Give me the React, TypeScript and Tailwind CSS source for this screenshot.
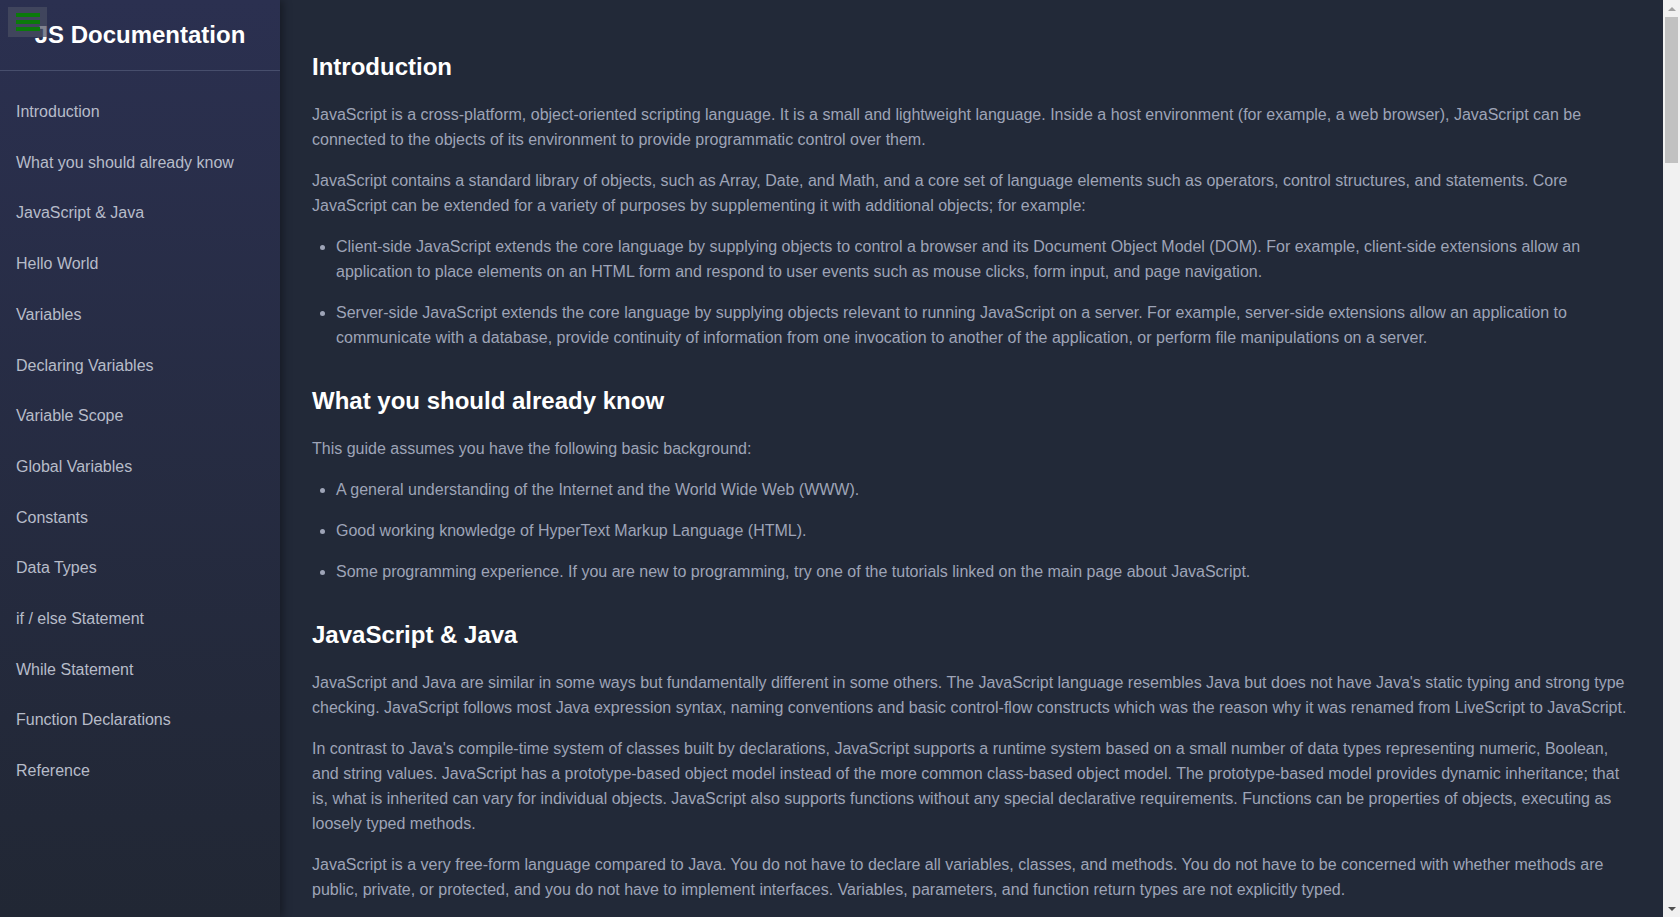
import React from "react";

type Block =
    | { kind: "p"; text: string }
    | { kind: "ul"; items: string[] }
    | { kind: "code"; text: string };

interface Section {
    title: string;
    blocks: Block[];
}

const sections: Section[] = [
    {
        title: "Introduction",
        blocks: [
            {
                kind: "p",
                text: "JavaScript is a cross-platform, object-oriented scripting language. It is a small and lightweight language. Inside a host environment (for example, a web browser), JavaScript can be connected to the objects of its environment to provide programmatic control over them.",
            },
            {
                kind: "p",
                text: "JavaScript contains a standard library of objects, such as Array, Date, and Math, and a core set of language elements such as operators, control structures, and statements. Core JavaScript can be extended for a variety of purposes by supplementing it with additional objects; for example:",
            },
            {
                kind: "ul",
                items: [
                    "Client-side JavaScript extends the core language by supplying objects to control a browser and its Document Object Model (DOM). For example, client-side extensions allow an application to place elements on an HTML form and respond to user events such as mouse clicks, form input, and page navigation.",
                    "Server-side JavaScript extends the core language by supplying objects relevant to running JavaScript on a server. For example, server-side extensions allow an application to communicate with a database, provide continuity of information from one invocation to another of the application, or perform file manipulations on a server.",
                ],
            },
        ],
    },
    {
        title: "What you should already know",
        blocks: [
            { kind: "p", text: "This guide assumes you have the following basic background:" },
            {
                kind: "ul",
                items: [
                    "A general understanding of the Internet and the World Wide Web (WWW).",
                    "Good working knowledge of HyperText Markup Language (HTML).",
                    "Some programming experience. If you are new to programming, try one of the tutorials linked on the main page about JavaScript.",
                ],
            },
        ],
    },
    {
        title: "JavaScript & Java",
        blocks: [
            {
                kind: "p",
                text: "JavaScript and Java are similar in some ways but fundamentally different in some others. The JavaScript language resembles Java but does not have Java's static typing and strong type checking. JavaScript follows most Java expression syntax, naming conventions and basic control-flow constructs which was the reason why it was renamed from LiveScript to JavaScript.",
            },
            {
                kind: "p",
                text: "In contrast to Java's compile-time system of classes built by declarations, JavaScript supports a runtime system based on a small number of data types representing numeric, Boolean, and string values. JavaScript has a prototype-based object model instead of the more common class-based object model. The prototype-based model provides dynamic inheritance; that is, what is inherited can vary for individual objects. JavaScript also supports functions without any special declarative requirements. Functions can be properties of objects, executing as loosely typed methods.",
            },
            {
                kind: "p",
                text: "JavaScript is a very free-form language compared to Java. You do not have to declare all variables, classes, and methods. You do not have to be concerned with whether methods are public, private, or protected, and you do not have to implement interfaces. Variables, parameters, and function return types are not explicitly typed.",
            },
        ],
    },
    {
        title: "Hello World",
        blocks: [
            {
                kind: "p",
                text: 'To get started with writing JavaScript, open the Scratchpad and write your first "Hello world" JavaScript code:',
            },
            {
                kind: "code",
                text: 'function greetMe(yourName) { alert("Hello " + yourName); }\ngreetMe("World");',
            },
            {
                kind: "p",
                text: "Select the code in the pad and hit Ctrl+R to watch it unfold in your browser!",
            },
        ],
    },
    {
        title: "Variables",
        blocks: [
            {
                kind: "p",
                text: "You use variables as symbolic names for values in your application. The names of variables, called identifiers, conform to certain rules.",
            },
            {
                kind: "p",
                text: 'A JavaScript identifier must start with a letter, underscore (_), or dollar sign ($); subsequent characters can also be digits (0-9). Because JavaScript is case sensitive, letters include the characters "A" through "Z" (uppercase) and the characters "a" through "z" (lowercase).',
            },
            {
                kind: "p",
                text: "You can use ISO 8859-1 or Unicode letters such as å and ü in identifiers. You can also use the Unicode escape sequences as characters in identifiers. Some examples of legal names are Number_hits, temp99, and _name.",
            },
        ],
    },
    {
        title: "Declaring Variables",
        blocks: [
            { kind: "p", text: "You can declare a variable in three ways:" },
            {
                kind: "ul",
                items: [
                    "With the keyword var. For example, var x = 42. This syntax can be used to declare both local and global variables.",
                    "By simply assigning it a value. For example, x = 42. This always declares a global variable. It generates a strict JavaScript warning. You shouldn't use this variant.",
                    "With the keyword let. For example, let y = 13. This syntax can be used to declare a block scope local variable. See Variable scope below.",
                ],
            },
        ],
    },
    {
        title: "Variable Scope",
        blocks: [
            {
                kind: "p",
                text: "When you declare a variable outside of any function, it is called a global variable, because it is available to any other code in the current document. When you declare a variable within a function, it is called a local variable, because it is available only within that function.",
            },
            {
                kind: "p",
                text: "JavaScript before ECMAScript 2015 does not have block statement scope; rather, a variable declared within a block is local to the function (or global scope) that the block resides within. For example the following code will log 5, because the scope of x is the function (or global context) within which x is declared, not the block, which in this case is an if statement.",
            },
            { kind: "code", text: "if (true) {\n  var x = 5;\n}\nconsole.log(x); // 5" },
            {
                kind: "p",
                text: "This behavior changes, when using the let declaration introduced in ECMAScript 2015.",
            },
            {
                kind: "code",
                text: "if (true) {\n  let y = 5;\n}\nconsole.log(y); // ReferenceError: y is not defined",
            },
        ],
    },
    {
        title: "Global Variables",
        blocks: [
            {
                kind: "p",
                text: "Global variables are in fact properties of the global object. In web pages the global object is window, so you can set and access global variables using the window.variable syntax.",
            },
            {
                kind: "p",
                text: "Consequently, you can access global variables declared in one window or frame from another window or frame by specifying the window or frame name. For example, if a variable called phoneNumber is declared in a document, you can refer to this variable from an iframe as parent.phoneNumber.",
            },
        ],
    },
    {
        title: "Constants",
        blocks: [
            {
                kind: "p",
                text: "You can create a read-only, named constant with the const keyword. The syntax of a constant identifier is the same as for a variable identifier: it must start with a letter, underscore or dollar sign and can contain alphabetic, numeric, or underscore characters.",
            },
            { kind: "code", text: "const PI = 3.14;" },
            {
                kind: "p",
                text: "A constant cannot change value through assignment or be re-declared while the script is running. It has to be initialized to a value.",
            },
            {
                kind: "p",
                text: "The scope rules for constants are the same as those for let block scope variables. If the const keyword is omitted, the identifier is assumed to represent a variable.",
            },
            {
                kind: "p",
                text: "You cannot declare a constant with the same name as a function or variable in the same scope. For example:",
            },
            {
                kind: "code",
                text: "// THIS WILL CAUSE AN ERROR\nfunction f() {};\nconst f = 5;\n\n// THIS WILL CAUSE AN ERROR ALSO\nfunction f() {\n  const g = 5;\n  var g;\n}",
            },
        ],
    },
    {
        title: "Data Types",
        blocks: [
            { kind: "p", text: "The latest ECMAScript standard defines seven data types:" },
            {
                kind: "ul",
                items: [
                    "Six data types that are primitives: Boolean, null, undefined, Number, String and Symbol.",
                    "and Object.",
                ],
            },
            {
                kind: "p",
                text: "Although these data types are a relatively small amount, they enable you to perform useful functions with your applications. Objects and functions are the other fundamental elements in the language. You can think of objects as named containers for values, and functions as procedures that your application can perform.",
            },
        ],
    },
    {
        title: "if / else Statement",
        blocks: [
            {
                kind: "p",
                text: "Use the if statement to execute a statement if a logical condition is true. Use the optional else clause to execute a statement if the condition is false. An if statement looks as follows:",
            },
            { kind: "code", text: "if (condition) {\n  statement_1;\n} else {\n  statement_2;\n}" },
            {
                kind: "p",
                text: "condition can be any expression that evaluates to true or false. See Boolean for an explanation of what evaluates to true and false. If condition evaluates to true, statement_1 is executed; otherwise, statement_2 is executed. statement_1 and statement_2 can be any statement, including further nested if statements.",
            },
        ],
    },
    {
        title: "While Statement",
        blocks: [
            {
                kind: "p",
                text: "A while statement executes its statements as long as a specified condition evaluates to true. A while statement looks as follows:",
            },
            { kind: "code", text: "while (condition)\n  statement" },
            {
                kind: "p",
                text: "If the condition becomes false, statement within the loop stops executing and control passes to the statement following the loop.",
            },
            {
                kind: "p",
                text: "The following while loop iterates as long as n is less than three:",
            },
            { kind: "code", text: "var n = 0;\nvar x = 0;\nwhile (n < 3) {\n  n++;\n  x += n;\n}" },
        ],
    },
    {
        title: "Function Declarations",
        blocks: [
            {
                kind: "p",
                text: "A function definition (also called a function declaration, or function statement) consists of the function keyword, followed by:",
            },
            {
                kind: "ul",
                items: [
                    "The name of the function.",
                    "A list of arguments to the function, enclosed in parentheses and separated by commas.",
                    "The JavaScript statements that define the function, enclosed in curly brackets, { }.",
                ],
            },
            {
                kind: "p",
                text: "For example, the following code defines a simple function named square:",
            },
            { kind: "code", text: "function square(number) {\n  return number * number;\n}" },
            {
                kind: "p",
                text: "The function square takes one argument, called number. The function consists of one statement that says to return the argument of the function (that is, number) multiplied by itself.",
            },
        ],
    },
    {
        title: "Reference",
        blocks: [
            {
                kind: "ul",
                items: ["All the documentation in this page is taken from MDN"],
            },
        ],
    },
];

const SectionBlock = ({ section }: { section: Section }) => (
    <section>
        <h2 className="mb-[21px] text-2xl font-bold leading-7 text-white">
            {section.title}
        </h2>
        {section.blocks.map((b, i) => {
            if (b.kind === "p") {
                return (
                    <p key={i} className="mb-4">
                        {b.text}
                    </p>
                );
            }
            if (b.kind === "ul") {
                return (
                    <ul key={i} className="list-disc pl-6">
                        {b.items.map((it, j) => (
                            <li key={j} className="mb-4">
                                {it}
                            </li>
                        ))}
                    </ul>
                );
            }
            return (
                <pre
                    key={i}
                    className="mb-4 whitespace-pre-wrap rounded bg-[#2c3347] px-4 py-3 font-['Liberation_Mono',monospace] text-sm text-[#c6cbd8]"
                >
                    {b.text}
                </pre>
            );
        })}
    </section>
);

// window scrollbar as it shows in the screenshot
const ScrollTrack = () => (
    <div className="sticky top-0 flex h-screen w-[17px] shrink-0 flex-col bg-[#f1f1f1]">
        <div className="flex h-[17px] items-center justify-center">
            <div className="h-0 w-0 border-x-[4px] border-b-[4px] border-x-transparent border-b-[#a3a3a3]" />
        </div>
        <div className="mx-[2px] h-[146px] bg-[#c1c1c1]" />
        <div className="flex-1" />
        <div className="flex h-[17px] items-center justify-center">
            <div className="h-0 w-0 border-x-[4px] border-t-[4px] border-x-transparent border-t-[#505050]" />
        </div>
    </div>
);

export default function App() {
    return (
        <div className="flex min-h-screen bg-[#222938] font-['Liberation_Sans',Arial,sans-serif] text-base">
            <aside className="relative sticky top-0 z-10 flex h-screen w-[280px] shrink-0 flex-col bg-gradient-to-b from-[#2b3050] to-[#212734] shadow-[3px_0_8px_rgba(0,0,0,0.35)]">
                <header className="flex h-[71px] items-center justify-center border-b border-[#474e6c]">
                    <h1 className="text-2xl font-bold text-white">JS Documentation</h1>
                </header>
                <button className="absolute left-2 top-[7px] flex h-[30px] w-[39px] flex-col items-center justify-center gap-[3px] bg-[#4a4f63]/70">
                    <span className="h-[4px] w-[24px] bg-[#0b7a0b]" />
                    <span className="h-[4px] w-[24px] bg-[#0b7a0b]" />
                    <span className="h-[4px] w-[24px] bg-[#0b7a0b]" />
                </button>
                <nav className="pt-[16px]">
                    {sections.map((s) => (
                        <a
                            key={s.title}
                            href={"#" + s.title}
                            className="block px-4 py-[13px] leading-[24.7px] text-[#b7bcc9]"
                        >
                            {s.title}
                        </a>
                    ))}
                </nav>
            </aside>
            <main className="flex min-w-0 flex-1 flex-col gap-[21px] px-8 pb-10 pt-[53px] leading-[25px] text-[#9ea4b7]">
                {sections.map((s) => (
                    <SectionBlock key={s.title} section={s} />
                ))}
            </main>
            <ScrollTrack />
        </div>
    );
}
